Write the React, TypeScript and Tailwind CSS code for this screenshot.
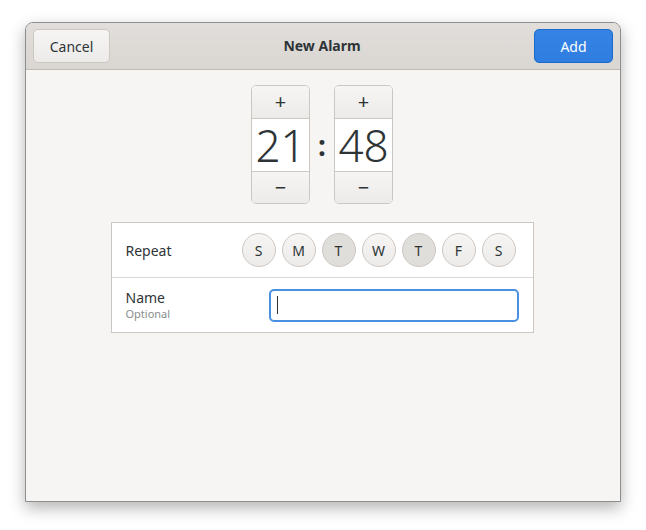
import { useState } from "react"

const DAYS = ["S", "M", "T", "W", "T", "F", "S"]

function Spinner({ value }: { value: string }) {
  return (
    <div className="flex w-[59px] flex-col overflow-hidden rounded-[5px] border border-[#cdc7c2] bg-white">
      <button className="flex h-[32px] items-center justify-center bg-gradient-to-b from-[#f6f5f4] to-[#edebe9] text-[20px] leading-none text-[#2e3436]">
        +
      </button>
      <div className="flex h-[54px] items-center justify-center border-y border-[#cdc7c2] bg-white text-[44px] font-light leading-none text-[#2e3436]">
        {value}
      </div>
      <button className="flex h-[31px] items-center justify-center bg-gradient-to-b from-[#f6f5f4] to-[#edebe9] text-[20px] leading-none text-[#2e3436]">
        −
      </button>
    </div>
  )
}

export default function App() {
  const [active] = useState([false, false, true, false, true, false, false])

  return (
    <div className="min-h-[530px] bg-white pl-[25px] pt-[22px] font-['Noto_Sans',sans-serif]">
      <div className="flex h-[480px] w-[596px] flex-col overflow-hidden rounded-t-[8px] border border-[#8e8e8e] bg-[#f6f5f4] shadow-[0_6px_16px_rgba(0,0,0,0.3)]">
        {/* header */}
        <div className="flex h-[47px] shrink-0 items-center justify-between border-b border-[#c0bab4] bg-gradient-to-b from-[#e1dedb] to-[#dad6d2] px-[7px]">
          <button className="h-[34px] w-[77px] rounded-[5px] border border-[#cdc7c2] bg-gradient-to-b from-[#f6f5f4] to-[#edebe9] text-[14px] text-[#2e3436]">
            Cancel
          </button>
          <div className="-mt-[2px] text-[14px] font-bold text-[#2e3436]">New Alarm</div>
          <button className="h-[34px] w-[79px] rounded-[5px] border border-[#1b6acb] bg-gradient-to-b from-[#3584e4] to-[#2f7de0] text-[14px] text-white">
            Add
          </button>
        </div>

        {/* body */}
        <div className="flex flex-col items-center pt-[15px]">
          <div className="flex -translate-x-[1px] items-center gap-[5px]">
            <Spinner value="21" />
            <div className="w-[14px] text-center text-[28px] font-bold leading-none text-[#2e3436]">:</div>
            <Spinner value="48" />
          </div>

          <div className="mt-[18px] w-[423px] -translate-x-[1px] border border-[#cdc7c2] bg-white">
            <div className="flex h-[55px] items-center justify-between border-b border-[#dcd8d5] pl-[14px] pr-[17px]">
              <span className="text-[14px] text-[#2e3436]">Repeat</span>
              <div className="flex gap-[6px]">
                {DAYS.map((d, i) => (
                  <button
                    key={i}
                    className={`flex h-[34px] w-[34px] items-center justify-center rounded-full border border-[#cdc7c2] text-[14px] text-[#2e3436] ${
                      active[i] ? "bg-[#e0dedb]" : "bg-gradient-to-b from-[#f6f5f4] to-[#edebe9]"
                    }`}
                  >
                    {d}
                  </button>
                ))}
              </div>
            </div>
            <div className="flex h-[54px] items-center justify-between pl-[14px] pr-[14px]">
              <div className="flex flex-col">
                <span className="text-[14px] leading-[18px] text-[#2e3436]">Name</span>
                <span className="text-[11px] leading-[14px] text-[#8a8d8e]">Optional</span>
              </div>
              <div className="flex h-[33px] w-[250px] items-center rounded-[5px] border-2 border-[#4a90e2] bg-white pl-[6px]">
                <div className="h-[18px] w-px bg-[#2e3436]" />
              </div>
            </div>
          </div>
        </div>
      </div>
    </div>
  )
}
